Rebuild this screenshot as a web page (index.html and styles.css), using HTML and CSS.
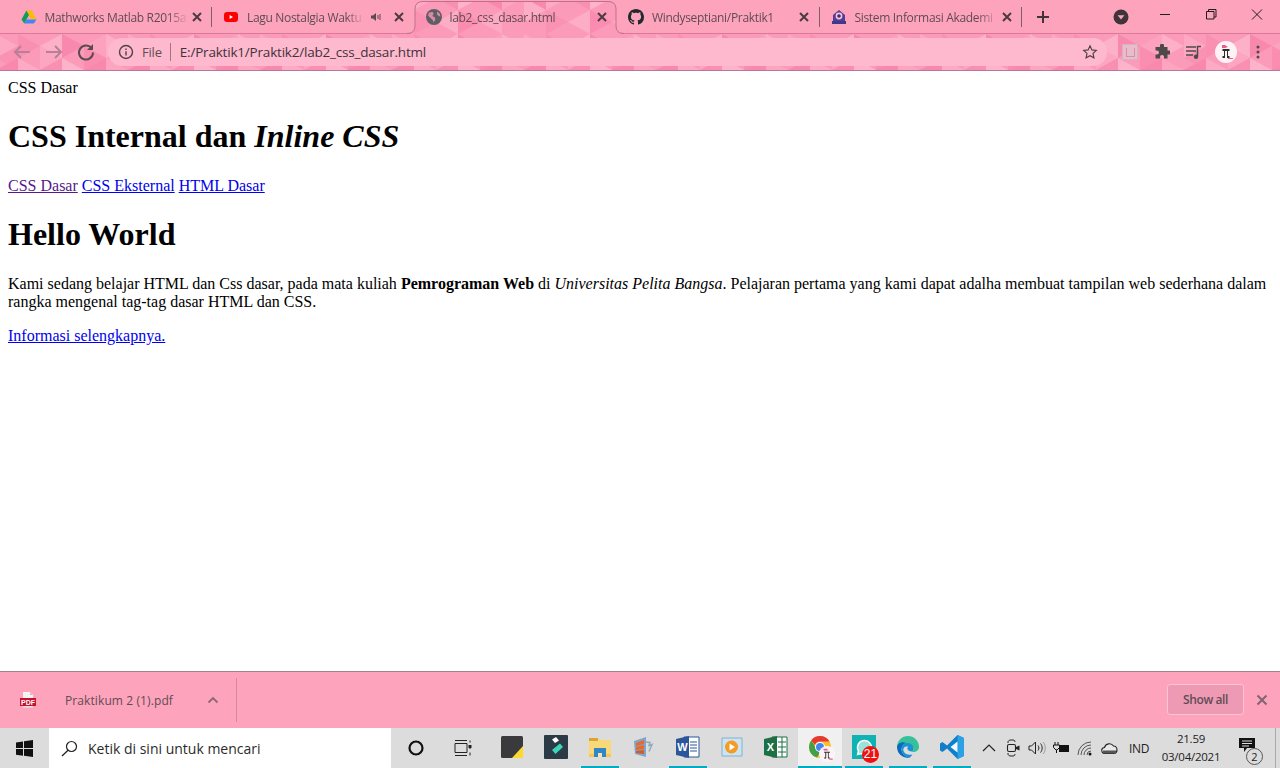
FILE: index.html
```html
<!DOCTYPE html>
<html lang="id">
<head>
<meta charset="utf-8">
<title>CSS Dasar</title>
<link rel="stylesheet" href="styles.css">
</head>
<body>
<header class="chrome">
  <svg class="theme" width="1280" height="71" viewBox="0 0 1280 71" aria-hidden="true">
    <defs>
      <pattern id="mosaic" width="132" height="72" patternUnits="userSpaceOnUse" patternTransform="translate(-4 34)">
        <rect width="132" height="72" fill="#fb9ab9"/>
        <polygon points="0,0 22,12 0,24" fill="#fda9c3"/>
        <polygon points="22,0 44,12 22,24" fill="#f98fb1"/>
        <polygon points="22,12 0,24 22,36" fill="#f992b3"/>
        <polygon points="44,12 66,0 66,24" fill="#fdb1c9"/>
        <polygon points="44,12 66,24 44,36" fill="#fda6c1"/>
        <polygon points="66,0 88,12 66,24" fill="#f888ad"/>
        <polygon points="88,12 110,0 110,24" fill="#fca2be"/>
        <polygon points="88,12 110,24 88,36" fill="#f98eb0"/>
        <polygon points="110,0 132,12 110,24" fill="#fdb0c8"/>
        <polygon points="0,36 22,24 22,48" fill="#f888ad"/>
        <polygon points="0,36 22,48 0,60" fill="#fdaec6"/>
        <polygon points="22,24 44,36 22,48" fill="#fdaac4"/>
        <polygon points="44,36 66,24 66,48" fill="#f98fb1"/>
        <polygon points="66,24 88,36 66,48" fill="#fdb3ca"/>
        <polygon points="88,36 110,24 110,48" fill="#f888ad"/>
        <polygon points="110,24 132,36 110,48" fill="#fda4bf"/>
        <polygon points="22,48 44,60 22,72" fill="#f992b3"/>
        <polygon points="44,60 66,48 66,72" fill="#fdaec6"/>
        <polygon points="66,48 88,60 66,72" fill="#f98cb0"/>
        <polygon points="88,60 110,48 110,72" fill="#fda9c3"/>
      </pattern>
    </defs>
    <rect width="1280" height="34" fill="#fea3bc"/>
    <rect y="34" width="1280" height="36" fill="url(#mosaic)"/>
    <path d="M0 33.5H1280" stroke="#d9799c"/>
    <path d="M407 34Q415 34 415 26V9Q415 1 423 1H608Q616 1 616 9V26Q616 34 624 34Z" fill="url(#mosaic)"/>
    <path d="M407 33.5Q415 33.5 415 26V9Q415 1.5 423 1.5H608Q616 1.5 616 9V26Q616 33.5 624 33.5" fill="none" stroke="#c0708f"/>
  </svg>

  <div class="tabstrip">
    <div class="tab sep">
      <svg class="ico" viewBox="0 0 16 16"><path d="M5.4 1.5h5.2L15.500 10.600H10.300z" fill="#fbbc04"/><path d="M5.4 1.5 8 6 3.300 14.500.5 10.600z" fill="#0f9d58"/><path d="M5.500 10.600h10L12.800 14.500H3.300z" fill="#4285f4"/></svg>
      <span class="title">Mathworks Matlab R2015a</span>
      <svg class="close" viewBox="0 0 16 16"><path d="M4 4l8 8M12 4l-8 8"/></svg>
    </div>
    <div class="tab">
      <svg class="ico" viewBox="0 0 16 16"><rect x="1" y="3" width="14" height="10" rx="3" fill="#f00"/><path d="M6.600 6 10 8l-3.400 2z" fill="#fff"/></svg>
      <span class="title">Lagu Nostalgia Waktu</span>
      <svg class="audio" viewBox="0 0 12 12"><path d="M1 4.5h2L6 2v8L3 7.5H1z" fill="#5c4a52"/><path d="M8 4v4M10 3v6" stroke="#5c4a52" fill="none"/></svg>
      <svg class="close" viewBox="0 0 16 16"><path d="M4 4l8 8M12 4l-8 8"/></svg>
    </div>
    <div class="tab">
      <svg class="ico" viewBox="0 0 16 16"><circle cx="8" cy="8" r="8" fill="#5f5f63"/><path d="M3 3.5 6.6 3l1 1.7-1.2 2.4 2.6 1.4.3 2-1.6 3-1-2.6-1.7-1.4L2 6.6zM11 2.4l2.6 2.2.9 3-1.8-.6-1.7-1.4z" fill="#d98aa6"/></svg>
      <span class="title">lab2_css_dasar.html</span>
      <svg class="close" viewBox="0 0 16 16"><path d="M4 4l8 8M12 4l-8 8"/></svg>
    </div>
    <div class="tab sep">
      <svg class="ico" viewBox="0 0 16 16"><path fill="#24292e" d="M8 0C3.58 0 0 3.58 0 8c0 3.54 2.29 6.53 5.47 7.59.4.07.55-.17.55-.38 0-.19-.01-.82-.01-1.49-2.01.37-2.53-.49-2.69-.94-.09-.23-.48-.94-.82-1.13-.28-.15-.68-.52-.01-.53.63-.01 1.08.58 1.23.82.72 1.21 1.87.87 2.33.66.07-.52.28-.87.51-1.07-1.78-.2-3.64-.89-3.64-3.95 0-.87.31-1.59.82-2.15-.08-.2-.36-1.02.08-2.12 0 0 .67-.21 2.2.82.64-.18 1.32-.27 2-.27s1.36.09 2 .27c1.53-1.04 2.2-.82 2.2-.82.44 1.1.16 1.92.08 2.12.51.56.82 1.27.82 2.15 0 3.07-1.87 3.75-3.65 3.95.29.25.54.73.54 1.48 0 1.07-.01 1.93-.01 2.2 0 .21.15.46.55.38A8.013 8.013 0 0016 8c0-4.42-3.58-8-8-8z"/></svg>
      <span class="title">Windyseptiani/Praktik1</span>
      <svg class="close" viewBox="0 0 16 16"><path d="M4 4l8 8M12 4l-8 8"/></svg>
    </div>
    <div class="tab sep">
      <svg class="ico" viewBox="0 0 16 16"><path d="M8 1 14 6v8H2V6z" fill="#5a3a96"/><circle cx="8" cy="7" r="3.4" fill="#f0c6d6"/><circle cx="8" cy="7" r="1.8" fill="#33307a"/><path d="M1 12h14v3H1z" fill="#3d3a8c"/></svg>
      <span class="title">Sistem Informasi Akademi</span>
      <svg class="close" viewBox="0 0 16 16"><path d="M4 4l8 8M12 4l-8 8"/></svg>
    </div>
    <svg class="newtab" viewBox="0 0 28 28"><path d="M14 8v12M8 14h12"/></svg>
    <svg class="profile" viewBox="0 0 16 16"><circle cx="8" cy="8" r="7.5" fill="#3f3438"/><path d="M4.6 6.2h6.8L8 10.6z" fill="#fea3bc"/></svg>
    <div class="winctl">
      <svg viewBox="0 0 46 29"><path d="M18 14.5h10"/></svg>
      <svg viewBox="0 0 46 29"><path d="M18.5 11.5h7.5v7.5h-7.5zM20.5 11.5V9.5H28V17h-2"/></svg>
      <svg viewBox="0 0 46 29"><path d="M18 9.5l10 10M28 9.5l-10 10"/></svg>
    </div>
  </div>

  <div class="toolbar">
    <svg class="tbtn dim" viewBox="0 0 32 32"><path d="M24 16H9M15 10l-6 6 6 6"/></svg>
    <svg class="tbtn dim" viewBox="0 0 32 32"><path d="M8 16h15M17 10l6 6-6 6"/></svg>
    <svg class="tbtn" viewBox="0 0 32 32"><path d="M21.5 12.2A7 7 0 1 0 23 16.5"/><path d="M23 8v6h-6z" class="solid"/></svg>
    <div class="omnibox">
      <svg class="info" viewBox="0 0 16 16"><circle cx="8" cy="8" r="6.5"/><path d="M8 7.2v4.2M8 4.4v1.6"/></svg>
      <span class="scheme">File</span>
      <span class="url">E:/Praktik1/Praktik2/lab2_css_dasar.html</span>
      <svg class="star" viewBox="0 0 18 18"><path d="M9 2l2.1 4.6 5 .6-3.7 3.4 1 5L9 13.1l-4.4 2.5 1-5L1.900 7.200l5-.6z"/></svg>
    </div>
    <span class="tool"><span class="ext"><span class="extin"></span></span></span>
    <span class="tool"><svg class="i16" viewBox="0 0 16 16"><path fill="#50494c" d="M6 1.500a2 2 0 0 1 4 0V3h3.500v3.500H15a2 2 0 0 1 0 4h-1.500V14.500H10V13a2 2 0 0 0-4 0v1.500H1.500V10.500H3a2 2 0 0 0 0-4H1.500V3H6z"/></svg></span>
    <span class="tool"><svg class="i16" viewBox="0 0 16 16"><path d="M0 3h10M0 7h10M0 11h7" stroke="#50494c" stroke-width="1.400" fill="none"/><path d="M11.500 12.500V2.500H15" stroke="#50494c" stroke-width="1.500" fill="none"/><circle cx="10" cy="12.800" r="2.200" fill="#50494c"/></svg></span>
    <span class="tool"><svg class="i22" viewBox="0 0 22 22"><circle cx="11" cy="11" r="11" fill="#fdf3f6"/><path d="M7 4h3l3 2-3 1H7z" fill="#e35d8f"/><path d="M7.500 8h7v2h-1.500v5h1.500v2h-2.500v-7h-2v7h-2.500v-2h1.500v-5H7.500z" fill="#2f2a2c"/><path d="M13 17h5v1h-5z" fill="#e35d8f"/></svg></span>
    <span class="tool"><svg class="i16" viewBox="0 0 16 16"><circle cx="8" cy="3" r="1.500" fill="#50494c"/><circle cx="8" cy="8" r="1.500" fill="#50494c"/><circle cx="8" cy="13" r="1.500" fill="#50494c"/></svg></span>
  </div>
</header>

<main class="page">
  <div>CSS Dasar</div>
  <h1>CSS Internal dan <i>Inline CSS</i></h1>
  <nav>
    <a class="visited" href="#">CSS Dasar</a>
    <a href="#">CSS Eksternal</a>
    <a href="#">HTML Dasar</a>
  </nav>
  <h1>Hello World</h1>
  <p>Kami sedang belajar HTML dan Css dasar, pada mata kuliah <b>Pemrograman Web</b> di <i>Universitas Pelita Bangsa</i>. Pelajaran pertama yang kami dapat adalha membuat tampilan web sederhana dalam rangka mengenal tag-tag dasar HTML dan CSS.</p>
  <p><a href="#">Informasi selengkapnya.</a></p>
</main>

<section class="downloads">
  <div class="dl-item">
    <svg class="pdf" viewBox="0 0 16 16"><path d="M3 0h7l3 3v5H3z" fill="#f6f1f2"/><path d="M10 0l3 3h-3z" fill="#c9bfc3"/><rect y="6" width="16" height="8" fill="#c8102e"/><path d="M3 14h10v1.500H3z" fill="#e9dfe2"/></svg>
    <span class="pdftag">PDF</span>
    <span class="dl-name">Praktikum 2 (1).pdf</span>
    <svg class="chev" viewBox="0 0 12 8"><path d="M1.500 6.500 6 2l4.500 4.500"/></svg>
  </div>
  <button class="showall">Show all</button>
  <svg class="dl-close" viewBox="0 0 18 18"><path d="M4.500 4.500l9 9M13.500 4.500l-9 9"/></svg>
</section>

<footer class="taskbar">
  <div class="start"><svg width="17" height="17" viewBox="0 0 17 17"><path d="M0 2.400 7 1.400v6.700H0zM8 1.200 17 0v8.100H8zM0 9h7v6.700l-7-1zM8 9h9v8l-9-1.200z" fill="#111"/></svg></div>
  <div class="search">
    <svg width="17" height="17" viewBox="0 0 17 17"><circle cx="10.500" cy="6.500" r="5" fill="none" stroke="#222" stroke-width="1.200"/><path d="M7 10.300 1 16" stroke="#222" stroke-width="1.300"/></svg>
    <span>Ketik di sini untuk mencari</span>
  </div>
  <div class="cortana"><svg width="16" height="16" viewBox="0 0 16 16"><circle cx="8" cy="8" r="6.500" fill="none" stroke="#111" stroke-width="2.200"/></svg></div>
  <div class="taskview"><svg width="18" height="16" viewBox="0 0 18 16"><path d="M1 .5h12M1 15.500h12M1 3.500h12v9H1zM16 .5v2M16 6v3M16 12.500v3" fill="none" stroke="#222"/><rect x="14.500" y="5" width="3" height="3" fill="#222"/></svg></div>
  <div class="apps">
    <div class="app"><svg width="22" height="22" viewBox="0 0 22 22"><rect width="22" height="22" rx="1.500" fill="#3a3a3c"/><path d="M22 10v12H11z" fill="#fbd92f"/></svg></div>
    <div class="app"><svg width="24" height="24" viewBox="0 0 24 24"><rect width="24" height="24" rx="1" fill="#2b3a44"/><path d="M8 4.500l4-2.500 3 3.500-4 2.500z" fill="#fff"/><path d="M8 15l8-6.500 3 3.500-7.500 7z" fill="#3bd6b9"/></svg></div>
    <div class="app on"><svg width="22" height="20" viewBox="0 0 22 20"><path d="M0 1h9l2 2h11v17H0z" fill="#f9d877"/><path d="M0 1h9v3H0z" fill="#d9a634"/><path d="M5 11h12v9H5z" fill="#2f86c8"/><path d="M9 16h4v4H9z" fill="#f9e6a8"/><path d="M0 17h5v3H0zM17 17h5v3h-5z" fill="#f4c752"/></svg></div>
    <div class="app"><svg width="24" height="22" viewBox="0 0 24 22"><path d="M2 5 14 1v20L3 18z" fill="#7fa6c9"/><path d="M4 7l8-3v4l-8 2zM4 11l8-2v4l-8 1z" fill="#e8692b"/><path d="M4 15l8-1v4l-8-1z" fill="#d85a22"/><path d="M14 6l4 .5-1 3 3-1-3 7" fill="none" stroke="#8ea9c0" stroke-width="1.500"/></svg></div>
    <div class="app on"><svg width="24" height="22" viewBox="0 0 24 22"><path d="M8 1h15v20H8z" fill="#fff" stroke="#2b579a"/><path d="M14 6h7M14 9h7M14 12h7M14 15h7" stroke="#2b579a"/><path d="M0 3 13 0v22L0 19z" fill="#2b579a"/><text class="apptxt" x="6.500" y="15" text-anchor="middle">W</text></svg></div>
    <div class="app"><svg width="22" height="22" viewBox="0 0 22 22"><path d="M1 2h20v18H1z" fill="#cfe3ee" stroke="#7eb2d2"/><circle cx="10.500" cy="11" r="6.500" fill="#f59a23"/><path d="M8.500 7.500 14 11l-5.500 3.500z" fill="#fff"/></svg></div>
    <div class="app"><svg width="24" height="22" viewBox="0 0 24 22"><path d="M8 1h15v20H8z" fill="#fff" stroke="#1d7044"/><path d="M14 6h8M14 11h8M14 16h8M18 1v20" stroke="#1d7044"/><path d="M0 3 13 0v22L0 19z" fill="#1d7044"/><text class="apptxt" x="6.500" y="15" text-anchor="middle">X</text></svg></div>
    <div class="app active on">
      <svg width="24" height="24" viewBox="0 0 24 24"><circle cx="12" cy="12" r="11" fill="#fbc02d"/><path d="M12 1a11 11 0 0 1 9.500 5.500H12a5.500 5.500 0 0 0-5.100 3.400L3.300 5.200A11 11 0 0 1 12 1z" fill="#e53935"/><path d="M1 12a11 11 0 0 1 2.300-6.800l4.900 8.500a5 5 0 0 0 4 3.300L9 22.600A11 11 0 0 1 1 12z" fill="#43a047"/><circle cx="12" cy="12" r="5" fill="#fff"/><circle cx="12" cy="12" r="4" fill="#4285f4"/></svg>
      <svg class="badge-avatar" width="16" height="16" viewBox="0 0 14 14"><circle cx="7" cy="7" r="7" fill="#fdf3f6"/><path d="M4.500 5h5v1h-1v4h1v1H7.800V6H6.300v5H4.500v-1h1V6h-1z" fill="#2f2a2c"/><path d="M4 2.500h3l1 1.500H4zM9 11h3v1H9z" fill="#e35d8f"/></svg>
    </div>
    <div class="app on">
      <span class="wa"><svg width="17" height="17" viewBox="0 0 16 16"><path d="M8 1.500a6.500 6.500 0 1 1-3.100 12.200L1.500 14.500l.8-3.300A6.500 6.500 0 0 1 8 1.500z" fill="#9be3d8" stroke="#fff" stroke-width="1.400"/></svg></span>
      <span class="count">21</span>
    </div>
    <div class="app on"><svg width="24" height="24" viewBox="0 0 24 24"><path d="M1 12a11 11 0 0 1 22 0c0 3.500-3 5-5.500 5-3 0-4.500-1-4.500-1s3 1 4.500-1c.5-2-1-5.500-5-5.500-3.500 0-6 2-7 4-1.500-1-4.500-.5-4.500-1.500z" fill="#37c19b"/><path d="M1 12c0-3 5-6 9-4-3 .5-5 3.500-4.500 7 .5 3.500 3.500 6.500 8 7.800A11 11 0 0 1 1 12z" fill="#0c6bb8"/><path d="M5.500 15c-.5-3.500 2-7 6-7 4 0 6.500 3 6 7-1.500 2-4.500 1-5.500 0-1-1-1-3 .5-3-3-1.500-6 1-5 4 1 2.500 4 4.500 9 3.500A11 11 0 0 1 13.500 22.800C9 21.500 6 18.500 5.500 15z" fill="#1a90d8"/></svg></div>
    <div class="app on"><svg width="24" height="24" viewBox="0 0 24 24"><path d="M17.500 0 24 3v18l-6.500 3L7 13.500l-4.500 3.500L0 15.500v-7L2.500 7 7 10.500z" fill="#0f7fcb"/><path d="M17.500 0 24 3v18l-6.500 3z" fill="#2aa0e6"/><path d="M17.500 6.500v11L10.500 12z" fill="#fff" fill-opacity=".95"/></svg></div>
  </div>
  <div class="tray">
    <span class="t24"><svg width="14" height="8" viewBox="0 0 14 8"><path d="M1 7l6-6 6 6" fill="none" stroke="#222" stroke-width="1.200"/></svg></span>
    <span class="t24"><svg width="14" height="18" viewBox="0 0 14 18"><path d="M2 4V3c0-1 1-2 3-2h2c1.500 0 2 .8 2 2M2 14v1c0 1 1 2 3 2h2c1.500 0 2-.8 2-2" fill="none" stroke="#222"/><rect x="1.500" y="5.500" width="8" height="7" rx="1.500" fill="none" stroke="#222" stroke-width="1.100"/><path d="M10 8l3.500-1.500v5L10 10z" fill="#222"/></svg></span>
    <span class="t24"><svg width="18" height="14" viewBox="0 0 18 14"><path d="M1 5h2.500L7.500 1v12L3.500 9H1zM10 4.500c1.200 1.500 1.200 3.500 0 5M12.500 2.500c2.200 2.500 2.200 6.500 0 9" fill="none" stroke="#222"/><path d="M15 1c3 3 3 9 0 12" fill="none" stroke="#999"/></svg></span>
    <span class="t24"><svg width="18" height="12" viewBox="0 0 18 12"><path d="M3 0v3M6 0v3M1.500 3h6v2.500L5 8H4L1.500 5.500zM4.500 8v3" fill="none" stroke="#111"/><rect x="7" y="3" width="10" height="7" fill="#111"/></svg></span>
    <span class="t24"><svg width="16" height="15" viewBox="0 0 16 15"><path d="M1 14A13 13 0 0 1 14 1M4 14A10 10 0 0 1 14 4M7 14a7 7 0 0 1 7-7M10 14a4 4 0 0 1 4-4" fill="none" stroke="#333" stroke-width=".8"/><circle cx="13" cy="13" r="1.500" fill="#111"/></svg></span>
    <span class="t24"><svg width="17" height="11" viewBox="0 0 17 11"><path d="M4 10.500a3 3 0 0 1-.5-6A5 5 0 0 1 12.500 3 3.800 3.800 0 0 1 13 10.500z" fill="#e8e8e8" stroke="#222" stroke-width="1.100"/><path d="M2 7.500h13v3H2z" fill="#555"/></svg></span>
    <span class="ind">IND</span>
    <span class="clock"><span>21.59</span><span>03/04/2021</span></span>
    <span class="action">
      <svg class="msg" width="16" height="15" viewBox="0 0 16 15"><path d="M0 0h16v10H8l-3 4v-4H0z" fill="#111"/><path d="M3 3h10M3 5.500h10M3 8h7" stroke="#ddd"/></svg>
      <span class="notif">2</span>
    </span>
    <span class="peek"></span>
  </div>
</footer>
</body>
</html>
```

FILE: styles.css
```css
* { box-sizing: border-box; }
html, body { height: 100%; }
body {
  margin: 0;
  display: flex;
  flex-direction: column;
  height: 768px;
  overflow: hidden;
  background: #fff;
  color: #000;
  font-family: "Liberation Serif", serif;
  font-size: 16px;
}

/* browser frame */
.chrome {
  position: relative;
  flex: none;
  height: 71px;
  border-bottom: 1px solid #b9789a;
  font-family: "Open Sans", "Noto Sans", sans-serif;
}
.theme { position: absolute; left: 0; top: 0; }
.tabstrip, .toolbar { position: relative; display: flex; align-items: center; }
.tabstrip { height: 34px; padding-left: 9.5px; }
.tab {
  flex: none;
  width: 202.5px;
  height: 34px;
  display: flex;
  align-items: center;
  padding: 0 7.5px 0 11px;
}
.tab.sep {
  background: linear-gradient(#7d5f6b, #7d5f6b) right 7px / 1px 20px no-repeat;
}
.ico { flex: none; width: 16px; height: 16px; margin-right: 8px; }
.title {
  flex: 1;
  min-width: 0;
  overflow: hidden;
  white-space: nowrap;
  font-size: 12px;
  letter-spacing: -0.32px;
  color: #5f4c54;
  -webkit-mask-image: linear-gradient(90deg, #000 85%, transparent);
  mask-image: linear-gradient(90deg, #000 85%, transparent);
}
.audio { flex: none; width: 12px; height: 12px; margin: 0 9px 0 6px; }
.close { flex: none; width: 16px; height: 16px; fill: none; stroke: #4a3b42; stroke-width: 2; }
.newtab { flex: none; width: 28px; height: 28px; margin-left: 7px; fill: none; stroke: #3f3438; stroke-width: 2; }
.profile { flex: none; width: 16px; height: 16px; margin-left: auto; margin-right: 13px; }
.winctl { flex: none; align-self: flex-start; display: flex; }
.winctl svg { width: 46px; height: 29px; fill: none; stroke: #1f1c1d; stroke-width: 1; }

.toolbar { height: 36px; padding-left: 6px; padding-right: 6px; }
.tbtn { flex: none; width: 32px; height: 32px; fill: none; stroke: #5a4b52; stroke-width: 2; }
.tbtn.dim { stroke: #b97f97; }
.tbtn .solid { fill: #5a4b52; stroke: none; }
.omnibox {
  flex: 1;
  min-width: 0;
  height: 28px;
  margin: 0 7px 0 6px;
  padding: 0 9px 0 10px;
  border-radius: 14px;
  background: #ffb9cf;
  display: flex;
  align-items: center;
  font-size: 13.500px;
  letter-spacing: -0.2px;
}
.info { flex: none; width: 16px; height: 16px; fill: none; stroke: #4f4148; stroke-width: 1.400; }
.scheme { margin-left: 8px; padding-right: 8px; border-right: 1px solid #9d7685; line-height: 18px; color: #5f4c54; font-size: 13px; }
.url { margin-left: 9px; color: #3d3338; }
.star { margin-left: auto; width: 16px; height: 16px; fill: none; stroke: #4f4148; stroke-width: 1.300; }
.tool { flex: none; width: 32px; height: 32px; display: flex; align-items: center; justify-content: center; }
.i16 { width: 16px; height: 16px; }
.i22 { width: 22px; height: 22px; }
.ext { width: 16px; height: 16px; background: #e9bccb; border: 1px solid #d6b3c0; display: flex; align-items: center; justify-content: center; }
.extin { width: 9px; height: 9px; border: 1px solid #d293a9; border-top-width: 0; }

/* page */
.page { flex: 1; min-height: 0; padding: 8px; overflow: hidden; }
.page a { color: #0000ee; }
.page a.visited { color: #551a8b; }

/* download shelf */
.downloads {
  flex: none;
  height: 57px;
  background: #fea3bc;
  border-top: 1px solid #9f8189;
  display: flex;
  align-items: center;
  padding-right: 9px;
  font-family: "Open Sans", "Noto Sans", sans-serif;
  font-size: 12px;
  color: #5f4c54;
}
.dl-item {
  flex: none;
  width: 237px;
  height: 44px;
  padding-left: 20px;
  display: flex;
  align-items: center;
  border-right: 1px solid #d98aa3;
}
.pdf { flex: none; width: 16px; height: 16px; }
.pdftag {
  flex: none;
  width: 16px;
  margin-left: -16px;
  margin-top: 4px;
  text-align: center;
  font: 700 7px "Liberation Sans", sans-serif;
  color: #fff;
}
.dl-name { margin-left: 29px; letter-spacing: 0.1px; }
.chev { width: 12px; height: 8px; margin-left: auto; margin-right: 17px; fill: none; stroke: #8a6a76; stroke-width: 1.800; }
.showall {
  flex: none;
  margin-left: auto;
  margin-bottom: 2px;
  width: 77px;
  height: 31px;
  background: #ef9ab5;
  border: 1px solid #fcc4d4;
  border-radius: 3px;
  font: inherit;
  font-weight: 600;
  letter-spacing: -0.4px;
  color: #5f4c54;
}
.dl-close { flex: none; width: 18px; height: 18px; margin-left: 9px; fill: none; stroke: #7e6570; stroke-width: 2; }

/* taskbar */
.taskbar {
  flex: none;
  height: 40px;
  background: #dcdcdc;
  display: flex;
  align-items: stretch;
  font-family: "Open Sans", "Noto Sans", sans-serif;
  color: #222;
}
.start { flex: none; width: 48px; display: flex; align-items: center; justify-content: center; }
.search {
  flex: none;
  width: 342px;
  margin-left: 1px;
  background: #fff;
  padding-left: 12px;
  display: flex;
  align-items: center;
  gap: 10px;
  font-size: 14px;
  color: #2b2b2b;
}
.cortana, .taskview { flex: none; width: 44px; display: flex; align-items: center; justify-content: center; }
.cortana { margin-left: 3px; }
.taskview { margin-left: 3px; }
.apps { flex: none; display: flex; margin-left: 5px; }
.app {
  flex: none;
  width: 44px;
  position: relative;
  display: flex;
  align-items: center;
  justify-content: center;
  border-bottom: 2px solid transparent;
  background-clip: padding-box;
}
.app.on { border-image: linear-gradient(90deg, transparent 4px, #00acc1 4px, #00acc1 calc(100% - 4px), transparent calc(100% - 4px)) 1 / 0 0 2px 0; }
.app.active { background: #f0f0f0; border-image: none; border-bottom-color: #00acc1; }
.apptxt { font: 700 11px "Liberation Sans", sans-serif; fill: #fff; }
.badge-avatar { position: absolute; left: 21px; top: 18px; }
.wa { width: 24px; height: 24px; background: #10b3b3; display: flex; align-items: center; justify-content: center; }
.count {
  position: absolute;
  left: 20px;
  top: 18px;
  width: 17px;
  height: 17px;
  border-radius: 50%;
  background: #ee1111;
  color: #fff;
  font: 12px/17px "Liberation Sans", sans-serif;
  text-align: center;
}
.tray { flex: none; display: flex; margin-left: 3px; align-items: center; }
.t24 { flex: none; width: 24px; display: flex; align-items: center; justify-content: center; }
.ind { flex: none; width: 36px; text-align: center; font-size: 12px; letter-spacing: -0.3px; }
.clock { flex: none; width: 68px; display: flex; flex-direction: column; align-items: center; font-size: 11.500px; line-height: 18px; letter-spacing: -0.25px; }
.action { flex: none; width: 44px; align-self: stretch; position: relative; display: flex; align-items: center; justify-content: center; }
.msg { margin-bottom: 6px; }
.notif {
  position: absolute;
  left: 21px;
  top: 20px;
  width: 17px;
  height: 17px;
  border-radius: 50%;
  border: 1px solid #555;
  background: #dcdcdc;
  font-size: 11px;
  line-height: 15px;
  text-align: center;
}
.peek { flex: none; width: 7px; height: 40px; border-right: 1px solid #aaa; }
```
